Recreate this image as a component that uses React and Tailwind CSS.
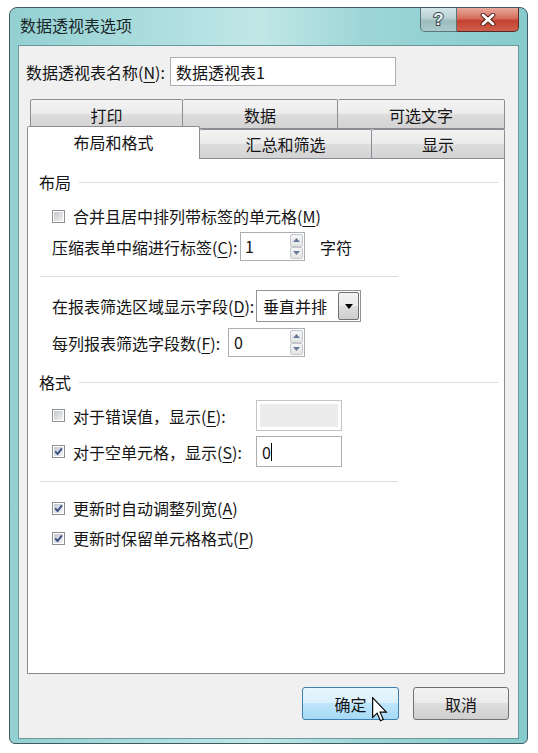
import React from "react";

const U = ({ children }) => (
  <span className="underline underline-offset-[3px] decoration-1">{children}</span>
);

function Checkbox({ checked }) {
  return (
    <span className="w-[13px] h-[13px] border border-[#8e8f8f] bg-white p-px flex shrink-0">
      <span className="flex-1 bg-[linear-gradient(135deg,#c4c8ce,#f2f2f2)] flex items-center justify-center">
        {checked && (
          <svg width="9" height="9" viewBox="0 0 9 9">
            <path d="M1.2 4.4 L3.6 7 L7.9 1.4" fill="none" stroke="#3d4f86" strokeWidth="1.9" />
          </svg>
        )}
      </span>
    </span>
  );
}

function SpinButtons() {
  return (
    <div className="flex flex-col w-[14px] h-full py-px pr-px">
      <div className="flex-1 border border-[#c3c6cc] rounded-[2px] bg-[linear-gradient(#f6f6f6,#e4e4e4)] flex items-center justify-center">
        <svg width="7" height="4" viewBox="0 0 7 4">
          <path d="M0 4 L3.5 0 L7 4 Z" fill="#6a7a9a" />
        </svg>
      </div>
      <div className="flex-1 border border-[#c3c6cc] rounded-[2px] bg-[linear-gradient(#f6f6f6,#e4e4e4)] flex items-center justify-center">
        <svg width="7" height="4" viewBox="0 0 7 4">
          <path d="M0 0 L3.5 4 L7 0 Z" fill="#6a7a9a" />
        </svg>
      </div>
    </div>
  );
}

function GroupHeader({ children }) {
  return (
    <div className="h-[22px] flex items-center pl-[11px] pr-[6px]">
      <span className="leading-[22px] whitespace-nowrap">{children}</span>
      <div className="flex-1 ml-[8px] h-px bg-[#d5dfe5]" />
    </div>
  );
}

export default function App() {
  return (
    <div className="w-[538px] h-[753px] bg-white pl-[9px] pt-[7px] [font-family:'Noto_Sans_CJK_SC',sans-serif] text-[16px] text-[#141414]">
      <div className="w-[519px] h-[737px] border border-[#3e5c62] rounded-t-[8px] rounded-b-[6px] bg-[linear-gradient(90deg,#93d0d2_0%,#b6e2e3_38%,#c2e7e7_48%,#9ed6d7_68%,#86cbcd_100%)] flex flex-col overflow-hidden">
        {/* Title bar */}
        <div className="h-[37px] flex shrink-0">
          <div className="flex-1 pl-[10px] pt-[6px] leading-[22px] text-[16px] text-[#1a2729] whitespace-nowrap">
            数据透视表选项
          </div>
          <div className="flex mr-[8px] h-[24px]">
            <div className="w-[37px] h-full border border-t-0 border-[#58777c] rounded-bl-[5px] bg-[linear-gradient(#d3e6e7,#b7d1d3_45%,#9cbcbf_55%,#a9c9cb)] flex items-center justify-center">
              <span className="text-[17px] font-bold leading-none text-[#eef3f4] [font-family:'Liberation_Sans',sans-serif] [-webkit-text-stroke:2px_#33474f] [paint-order:stroke_fill]">
                ?
              </span>
            </div>
            <div className="w-[62px] h-full border border-t-0 border-l-0 border-[#5a2a2a] rounded-br-[5px] bg-[linear-gradient(#e9a99c,#d56d5c_45%,#c4412f_55%,#d0604c)] flex items-center justify-center">
              <svg width="16" height="13" viewBox="0 0 16 13">
                <path d="M3 2 L13 11 M13 2 L3 11" stroke="#4a1c16" strokeWidth="4.6" strokeLinecap="round" />
                <path d="M3 2 L13 11 M13 2 L3 11" stroke="#ffffff" strokeWidth="2.8" strokeLinecap="round" />
              </svg>
            </div>
          </div>
        </div>

        {/* Client area */}
        <div className="mx-[8px] h-[694px] border border-[#6b989d] bg-[#f0f0f0] flex flex-col">
          {/* Name row */}
          <div className="mt-[11px] h-[29px] flex items-center pl-[7px]">
            <div className="w-[144px] whitespace-nowrap leading-[22px]">
              数据透视表名称(<U>N</U>):
            </div>
            <div className="w-[226px] h-[29px] border border-[#abadb3] bg-white pl-[5px] flex items-center leading-[22px]">
              数据透视表1
            </div>
          </div>

          {/* Tabs */}
          <div className="mt-[13px] ml-[8px] w-[478px]">
            <div className="h-[30px] flex pl-[3px]">
              <div className="w-[153px] border border-[#8c8e94] rounded-t-[2px] bg-[linear-gradient(#f3f3f3,#ebebeb_50%,#dddddd_50%,#d3d3d3)] flex items-start justify-center pt-[4px] leading-[22px]">
                打印
              </div>
              <div className="w-[155px] border border-l-0 border-[#8c8e94] rounded-t-[2px] bg-[linear-gradient(#f3f3f3,#ebebeb_50%,#dddddd_50%,#d3d3d3)] flex items-start justify-center pt-[4px] leading-[22px]">
                数据
              </div>
              <div className="w-[167px] border border-l-0 border-[#8c8e94] rounded-t-[2px] bg-[linear-gradient(#f3f3f3,#ebebeb_50%,#dddddd_50%,#d3d3d3)] flex items-start justify-center pt-[4px] leading-[22px]">
                可选文字
              </div>
            </div>
            <div className="h-[29px] flex items-end">
              <div className="relative z-10 w-[173px] h-[33px] -mb-px border border-b-0 border-[#8c8e94] rounded-t-[2px] bg-white flex items-start justify-center pt-[4px] leading-[22px]">
                布局和格式
              </div>
              <div className="w-[172px] h-[29px] border border-l-0 border-b-0 border-[#8c8e94] rounded-t-[2px] bg-[linear-gradient(#f3f3f3,#ebebeb_50%,#dddddd_50%,#d3d3d3)] flex items-center justify-center leading-[22px]">
                汇总和筛选
              </div>
              <div className="w-[133px] h-[29px] border border-l-0 border-b-0 border-[#8c8e94] rounded-t-[2px] bg-[linear-gradient(#f3f3f3,#ebebeb_50%,#dddddd_50%,#d3d3d3)] flex items-center justify-center leading-[22px]">
                显示
              </div>
            </div>

            {/* Panel */}
            <div className="h-[516px] border border-[#898c95] bg-white flex flex-col">
              <div className="mt-[12px]">
                <GroupHeader>布局</GroupHeader>
              </div>

              <div className="mt-[12px] h-[22px] flex items-center pl-[24px]">
                <Checkbox />
                <span className="ml-[8px] leading-[22px] whitespace-nowrap">
                  合并且居中排列带标签的单元格(<U>M</U>)
                </span>
              </div>

              <div className="mt-[5px] h-[29px] flex items-center pl-[24px]">
                <span className="w-[188px] leading-[22px] whitespace-nowrap">
                  压缩表单中缩进行标签(<U>C</U>):
                </span>
                <div className="w-[65px] h-[29px] border border-[#abadb3] bg-white flex">
                  <span className="flex-1 pl-[4px] leading-[27px]">1</span>
                  <SpinButtons />
                </div>
                <span className="ml-[15px] leading-[22px]">字符</span>
              </div>

              <div className="mt-[15px] ml-[12px] w-[358px] h-px bg-[#d5dfe5]" />

              <div className="mt-[13px] h-[32px] flex items-center pl-[24px]">
                <span className="w-[204px] leading-[22px] whitespace-nowrap">
                  在报表筛选区域显示字段(<U>D</U>):
                </span>
                <div className="w-[105px] h-[32px] border border-[#8f9298] bg-white flex p-px">
                  <span className="flex-1 pl-[5px] leading-[28px] whitespace-nowrap">垂直并排</span>
                  <div className="w-[21px] h-full border border-[#707070] rounded-[2px] bg-[linear-gradient(#f2f2f2,#ebebeb_50%,#dddddd_50%,#cfcfcf)] flex items-center justify-center">
                    <svg width="8" height="5" viewBox="0 0 8 5">
                      <path d="M0 0 L8 0 L4 5 Z" fill="#000" />
                    </svg>
                  </div>
                </div>
              </div>

              <div className="mt-[6px] h-[29px] flex items-center pl-[24px]">
                <span className="w-[176px] leading-[22px] whitespace-nowrap">
                  每列报表筛选字段数(<U>F</U>):
                </span>
                <div className="w-[77px] h-[29px] border border-[#abadb3] bg-white flex">
                  <span className="flex-1 pl-[5px] leading-[27px]">0</span>
                  <SpinButtons />
                </div>
              </div>

              <div className="mt-[14px]">
                <GroupHeader>格式</GroupHeader>
              </div>

              <div className="mt-[7px] h-[31px] flex items-center pl-[24px]">
                <div className="w-[204px] flex items-center">
                  <Checkbox />
                  <span className="ml-[8px] leading-[22px] whitespace-nowrap">
                    对于错误值，显示(<U>E</U>):
                  </span>
                </div>
                <div className="w-[86px] h-[31px] border border-[#c2c4c8] bg-white p-[3px] flex">
                  <div className="flex-1 bg-[#ececec]" />
                </div>
              </div>

              <div className="mt-[5px] h-[31px] flex items-center pl-[24px]">
                <div className="w-[204px] flex items-center">
                  <Checkbox checked />
                  <span className="ml-[8px] leading-[22px] whitespace-nowrap">
                    对于空单元格，显示(<U>S</U>):
                  </span>
                </div>
                <div className="w-[86px] h-[31px] border border-[#abadb3] bg-white pl-[5px] flex items-center">
                  <span className="leading-[22px]">0</span>
                  <span className="w-px h-[18px] bg-black" />
                </div>
              </div>

              <div className="mt-[14px] ml-[12px] w-[358px] h-px bg-[#d5dfe5]" />

              <div className="mt-[15px] h-[22px] flex items-center pl-[24px]">
                <Checkbox checked />
                <span className="ml-[8px] leading-[22px] whitespace-nowrap">
                  更新时自动调整列宽(<U>A</U>)
                </span>
              </div>

              <div className="mt-[8px] h-[22px] flex items-center pl-[24px]">
                <Checkbox checked />
                <span className="ml-[8px] leading-[22px] whitespace-nowrap">
                  更新时保留单元格格式(<U>P</U>)
                </span>
              </div>
            </div>
          </div>

          {/* Buttons */}
          <div className="mt-[13px] flex justify-end pr-[9px] gap-[14px]">
            <div className="relative w-[97px] h-[33px] border border-[#3c7fb1] rounded-[3px] bg-[linear-gradient(#eaf6fd,#d9f0fc_50%,#bee6fd_50%,#a7d9f5)] flex items-center justify-center leading-[22px]">
              确定
              <svg
                className="absolute left-[69px] top-[9px]"
                width="16"
                height="25"
                viewBox="0 0 12.5 19.5"
              >
                <path
                  d="M0.5 0.5 L0.5 16 L4 12.6 L6.6 18.6 L8.8 17.6 L6.3 11.8 L11.2 11.8 Z"
                  fill="#ffffff"
                  stroke="#000000"
                  strokeWidth="0.9"
                  strokeLinejoin="miter"
                />
              </svg>
            </div>
            <div className="w-[96px] h-[33px] border border-[#707070] rounded-[3px] bg-[linear-gradient(#f2f2f2,#ebebeb_50%,#dddddd_50%,#cfcfcf)] flex items-center justify-center leading-[22px]">
              取消
            </div>
          </div>
        </div>
      </div>
    </div>
  );
}
